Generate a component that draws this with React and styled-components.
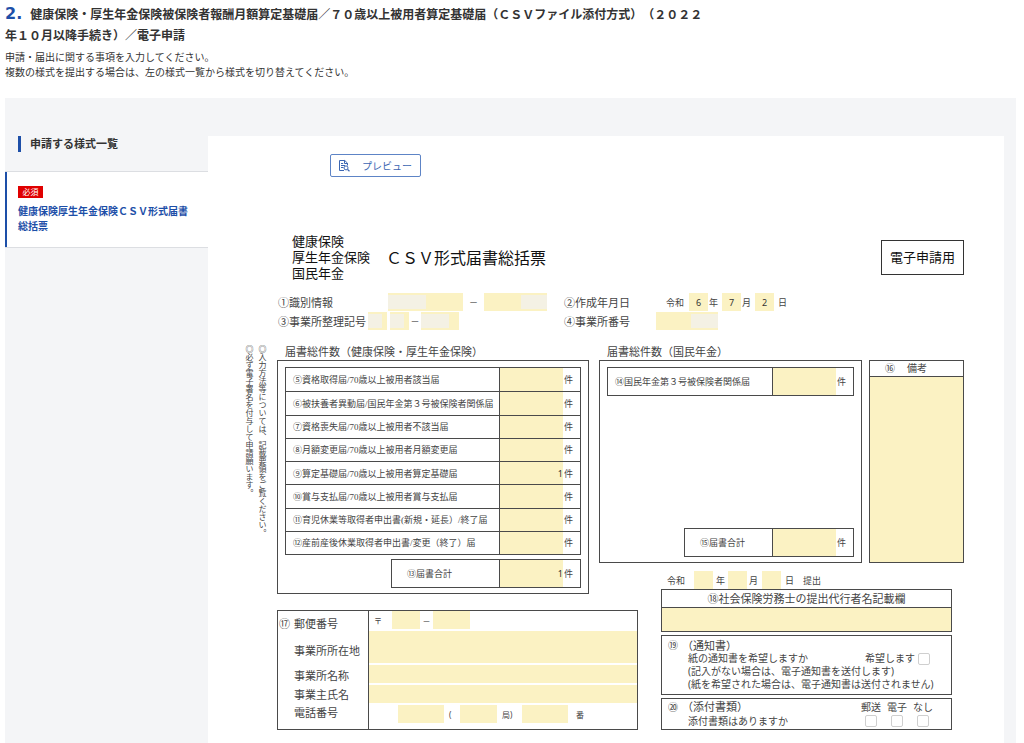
import React from 'react';
import styled, { createGlobalStyle } from 'styled-components';

const BLUE = '#1d4fa8';
const YELLOW = '#fbf2c3';
const MASK = '#f4f1e4';
const LINE = '#4a4a4a';

const GlobalStyle = createGlobalStyle`
  *, *::before, *::after {
    box-sizing: border-box;
  }

  body {
    margin: 0;
    background: #fff;
    color: #333;
    font-family: 'Noto Sans', 'Noto Sans CJK JP', sans-serif;
    font-size: 10px;
    text-spacing-trim: space-all;
  }
`;

const Page = styled.div`
  display: flex;
  flex-direction: column;
  min-height: 100vh;
  padding: 3px 8px 0 5px;
`;

const PageTitle = styled.h1`
  margin: 0;
  font-family: 'Noto Sans CJK JP', sans-serif;
  font-size: 12px;
  font-weight: 700;
  line-height: 21px;
`;

const StepNumber = styled.span`
  margin-right: 8px;
  font-family: 'DejaVu Sans', sans-serif;
  font-size: 16px;
  line-height: 1;
  color: ${BLUE};
`;

const Lead = styled.p`
  margin: 5px 0 18px;
  font-size: 10px;
  line-height: 15px;
`;

const Panel = styled.div`
  flex: 1;
  display: flex;
  padding: 38px 12px 0 0;
  background: #f4f5f7;
`;

const Sidebar = styled.nav`
  flex: 0 0 203px;
`;

const SidebarTitle = styled.h2`
  margin: 0 0 19px 13px;
  padding-left: 9px;
  border-left: 3px solid ${BLUE};
  font-size: 11px;
  line-height: 16px;
`;

const SidebarItem = styled.a`
  display: block;
  padding: 14px 16px 13px 13px;
  border: solid #dcdee2;
  border-width: 1px 0;
  box-shadow: inset 2px 0 0 ${BLUE};
  background: #fff;
  color: ${BLUE};
  font-weight: 700;
  line-height: 15px;
  text-decoration: none;
`;

const RequiredBadge = styled.span`
  display: block;
  width: 25px;
  margin-bottom: 6px;
  background: #e00000;
  color: #fff;
  font-size: 8px;
  font-weight: 400;
  line-height: 12px;
  text-align: center;
`;

const Main = styled.main`
  flex: 1;
  min-width: 0;
  padding: 18px 40px 13px 35px;
  background: #fff;
  color: #444;
`;

const PreviewButton = styled.button`
  display: flex;
  align-items: center;
  gap: 11px;
  height: 23px;
  margin: 0 0 56px 87px;
  padding: 0 8px 0 7px;
  border: 1px solid #5d84c6;
  border-radius: 2px;
  background: #fff;
  color: #3c66b2;
  font-family: inherit;
  font-size: 10px;
`;

const FormHead = styled.div`
  display: flex;
  align-items: center;
  padding-left: 49px;
  margin-bottom: 12px;
  color: #111;
`;

const Schemes = styled.div`
  margin-right: 16px;
  font-size: 13px;
  line-height: 16px;
`;

const FormTitle = styled.h2`
  margin: 0;
  font-size: 16px;
  font-weight: 400;
`;

const Stamp = styled.div`
  margin-left: auto;
  padding: 0 8px;
  border: 1px solid #333;
  font-size: 13px;
  line-height: 33px;
`;

const IdGrid = styled.div`
  display: grid;
  grid-template-columns: 286px 1fr;
  row-gap: 1px;
  margin-bottom: 15px;
  padding-left: 35px;
`;

const Line = styled.div`
  display: flex;
  align-items: center;
  height: 18px;
  padding-left: ${({ $indent }) => $indent || 0}px;
`;

const FieldLabel = styled.span`
  flex: 0 0 ${({ $w }) => $w}px;
  font-size: 11px;
  white-space: nowrap;
`;

const Unit = styled.span`
  flex: 0 0 ${({ $w }) => $w}px;
  padding-left: ${({ $pad }) => $pad || 0}px;
  font-size: ${({ $small }) => ($small ? 8 : 9)}px;
  text-align: ${({ $center }) => ($center ? 'center' : 'left')};
  white-space: nowrap;
`;

const Input = styled.input`
  display: block;
  width: 100%;
  height: 100%;
  min-width: 0;
  margin: 0;
  padding: 0;
  border: 0;
  border-radius: 0;
  outline: 0;
  background: ${YELLOW};
  color: #333;
  font-family: inherit;
  font-size: 9px;
  text-align: ${({ $align }) => $align || 'left'};
`;

const FieldBox = styled.span`
  position: relative;
  flex: 0 0 ${({ $w }) => $w}px;
  height: 18px;
  margin-right: ${({ $after }) => $after || 0}px;
`;

const Mask = styled.span`
  position: absolute;
  top: 2px;
  bottom: 2px;
  ${({ $side }) => $side || 'left'}: 0;
  width: ${({ $w }) => $w}px;
  background: ${MASK};
`;

const FormBody = styled.div`
  display: flex;
  align-items: flex-start;
`;

const SideNotes = styled.div`
  flex: 0 0 34px;
  padding-right: 8px;
  font-size: 8px;
  line-height: 13px;
  white-space: nowrap;
  writing-mode: vertical-rl;
`;

const Sheet = styled.div`
  flex: 1;
  min-width: 0;
`;

const CountArea = styled.div`
  display: grid;
  grid-template-columns: 315fr 263fr 95fr;
  column-gap: 7px;
  align-items: start;
`;

const CountGroup = styled.section`
  min-width: 0;
  padding-right: ${({ $gap }) => $gap || 0}px;
`;

const Caption = styled.h3`
  margin: 0;
  padding-left: 8px;
  font-size: 11px;
  font-weight: 400;
  line-height: 13px;
  height: 15px;
  white-space: nowrap;
`;

const Frame = styled.div`
  display: flex;
  flex-direction: column;
  align-items: flex-end;
  justify-content: space-between;
  height: ${({ $h }) => $h}px;
  padding: 6px 7px 5px;
  border: 1px solid ${LINE};
`;

const CountList = styled.div`
  display: grid;
  grid-auto-rows: 1fr;
  width: ${({ $w }) => $w || '100%'};
  height: ${({ $h }) => $h}px;
  border: 1px solid ${LINE};
`;

const CountItem = styled.div`
  display: grid;
  grid-template-columns: 1fr 63px 17px;
  align-items: center;
  min-height: 0;

  & + & {
    border-top: 1px solid ${LINE};
  }
`;

const CountLabel = styled.label`
  display: flex;
  align-items: center;
  align-self: stretch;
  padding-left: ${({ $pad }) => $pad || 7}px;
  border-right: 1px solid ${LINE};
  font-family: 'Liberation Serif', 'Noto Sans CJK JP', serif;
  font-size: 9px;
  white-space: nowrap;
`;

const CountUnit = styled.span`
  padding-left: 1px;
  font-size: 9px;
`;

const Remarks = styled.div`
  display: flex;
  flex-direction: column;
  height: 203px;
  margin-top: 15px;
  border: 1px solid ${LINE};
`;

const RemarksLabel = styled.label`
  display: flex;
  gap: 12px;
  padding-left: 15px;
  border-bottom: 1px solid ${LINE};
  line-height: 15px;
`;

const TextArea = styled.textarea`
  flex: 1;
  display: block;
  width: 100%;
  min-height: 0;
  padding: 0;
  border: 0;
  outline: 0;
  resize: none;
  background: ${YELLOW};
  font-family: inherit;
  font-size: 9px;
`;

const LowerArea = styled.div`
  display: flex;
  align-items: flex-end;
  padding-right: 12px;
  margin-top: -23px;
`;

const Office = styled.div`
  flex: 360;
  display: grid;
  grid-template-columns: 91px 1fr;
  margin-right: 23px;
  border: 1px solid ${LINE};
`;

const OfficeLabels = styled.div`
  display: grid;
  grid-template-rows: 24px 30px 20px 18px 18px;
  align-content: start;
  align-items: center;
  border-right: 1px solid ${LINE};
  font-size: 11px;
  white-space: nowrap;
`;

const OfficeLabel = styled.label`
  display: grid;
  grid-template-columns: 15px 1fr;
  padding-left: 1px;
`;

const OfficeFields = styled.div`
  display: grid;
  grid-template-rows: 18px 32px 18px 18px 18px;
  row-gap: 2px;
  padding-bottom: 6px;
`;

const Submission = styled.div`
  flex: 292;
  display: flex;
  flex-direction: column;
  gap: 3px;
`;

const Agent = styled.div`
  border: 1px solid ${LINE};
`;

const AgentLabel = styled.label`
  display: block;
  border-bottom: 1px solid ${LINE};
  font-size: 11px;
  line-height: 17px;
  text-align: center;
`;

const AgentInput = styled(Input)`
  height: 23px;
`;

const Box = styled.fieldset`
  display: grid;
  grid-template-columns: 14px 1fr auto;
  min-width: 0;
  margin: 0;
  padding: ${({ $pad }) => $pad};
  border: 1px solid ${LINE};
  line-height: ${({ $lh }) => $lh}px;
  white-space: nowrap;
`;

const BoxTitle = styled.div`
  font-size: 11px;
`;

const Question = styled.div`
  grid-column: 2;
  padding-left: 6px;
`;

const Note = styled.div`
  grid-column: 2 / -1;
  padding-left: 6px;
`;

const Choices = styled.div`
  grid-column: 3;
  grid-row: 1 / 3;
  display: flex;
  gap: 6px;
`;

const Choice = styled.label`
  display: flex;
  flex-direction: ${({ $row }) => ($row ? 'row' : 'column')};
  align-items: ${({ $row }) => ($row ? 'flex-end' : 'center')};
  gap: ${({ $row }) => ($row ? 3 : 1)}px;
`;

const Checkbox = styled.input`
  appearance: none;
  flex: none;
  width: 12px;
  height: 12px;
  margin: 0;
  border: 1px solid #cfcfcf;
  border-radius: 2px;
  background: #fff;
`;

const counts = [
  { label: '⑤資格取得届/70歳以上被用者該当届' },
  { label: '⑥被扶養者異動届/国民年金第３号被保険者関係届' },
  { label: '⑦資格喪失届/70歳以上被用者不該当届' },
  { label: '⑧月額変更届/70歳以上被用者月額変更届' },
  { label: '⑨算定基礎届/70歳以上被用者算定基礎届', value: '1' },
  { label: '⑩賞与支払届/70歳以上被用者賞与支払届' },
  { label: '⑪育児休業等取得者申出書(新規・延長）/終了届' },
  { label: '⑫産前産後休業取得者申出書/変更（終了）届' },
];

const PreviewIcon = () => (
  <svg width="13" height="13" viewBox="0 0 13 13" fill="none" stroke="currentColor" aria-hidden="true">
    <path d="M6 11.5H1.5V1.5h5.3l2.7 2.7v2.3" />
    <path d="M6.5 1.5v3h3" />
    <path d="M3 4.5h2.2M3 6.5h4M3 8.5h2.4" />
    <circle cx="8" cy="8.9" r="2" />
    <path d="M9.6 10.5l1.9 1.7" strokeWidth="1.2" />
  </svg>
);

const Field = ({ name, w, value = '', align, after, mask, side }) => (
  <FieldBox $w={w} $after={after}>
    <Input aria-label={name} defaultValue={value} $align={align} />
    {mask && <Mask $w={mask} $side={side} />}
  </FieldBox>
);

const Count = ({ id, label, value = '', pad }) => (
  <CountItem>
    <CountLabel htmlFor={id} $pad={pad}>{label}</CountLabel>
    <Input id={id} defaultValue={value} $align="right" />
    <CountUnit>件</CountUnit>
  </CountItem>
);

const App = () => (
  <>
    <GlobalStyle />
    <Page lang="ja">
      <PageTitle>
        <StepNumber>2.</StepNumber>
        健康保険・厚生年金保険被保険者報酬月額算定基礎届／７０歳以上被用者算定基礎届（ＣＳＶファイル添付方式）（２０２２
        <br />
        年１０月以降手続き）／電子申請
      </PageTitle>
      <Lead>
        申請・届出に関する事項を入力してください。
        <br />
        複数の様式を提出する場合は、左の様式一覧から様式を切り替えてください。
      </Lead>

      <Panel>
        <Sidebar>
          <SidebarTitle>申請する様式一覧</SidebarTitle>
          <SidebarItem href="#form">
            <RequiredBadge>必須</RequiredBadge>
            健康保険厚生年金保険ＣＳＶ形式届書総括票
          </SidebarItem>
        </Sidebar>

        <Main id="form">
          <PreviewButton type="button">
            <PreviewIcon />
            プレビュー
          </PreviewButton>

          <FormHead>
            <Schemes>
              健康保険
              <br />
              厚生年金保険
              <br />
              国民年金
            </Schemes>
            <FormTitle>ＣＳＶ形式届書総括票</FormTitle>
            <Stamp>電子申請用</Stamp>
          </FormHead>

          <IdGrid>
            <Line>
              <FieldLabel $w={110}>①識別情報</FieldLabel>
              <Field name="識別情報 1" w={75} mask={38} />
              <Unit $w={21} $center>－</Unit>
              <Field name="識別情報 2" w={63} mask={26} side="right" />
            </Line>
            <Line>
              <FieldLabel $w={102}>②作成年月日</FieldLabel>
              <Unit $w={23}>令和</Unit>
              <Field name="作成年" w={19} value="6" align="center" />
              <Unit $w={14} $pad={1}>年</Unit>
              <Field name="作成月" w={19} value="7" align="center" />
              <Unit $w={14} $pad={1}>月</Unit>
              <Field name="作成日" w={19} value="2" align="center" />
              <Unit $w={14} $pad={4}>日</Unit>
            </Line>
            <Line>
              <FieldLabel $w={90}>③事業所整理記号</FieldLabel>
              <Field name="事業所整理記号 1" w={19} mask={14} after={3} />
              <Field name="事業所整理記号 2" w={19} mask={14} />
              <Unit $w={12} $center>－</Unit>
              <Field name="事業所整理記号 3" w={38} mask={28} />
            </Line>
            <Line>
              <FieldLabel $w={92}>④事業所番号</FieldLabel>
              <Field name="事業所番号" w={62} mask={27} side="right" />
            </Line>
          </IdGrid>

          <FormBody>
            <SideNotes>
              ◎入力方法等については、記載要領をご覧ください。
              <br />
              ◎必ず電子署名を付与して申請願います。
            </SideNotes>

            <Sheet>
              <CountArea>
                <CountGroup $gap={3}>
                  <Caption>届書総件数（健康保険・厚生年金保険）</Caption>
                  <Frame $h={234}>
                    <CountList $h={188}>
                      {counts.map(({ label, value }, i) => (
                        <Count key={label} id={`count-${i}`} label={label} value={value} />
                      ))}
                    </CountList>
                    <CountList $h={29} $w="190px">
                      <Count id="count-total" label="⑬届書合計" value="1" pad={15} />
                    </CountList>
                  </Frame>
                </CountGroup>
                <CountGroup>
                  <Caption>届書総件数（国民年金）</Caption>
                  <Frame $h={203}>
                    <CountList $h={29}>
                      <Count id="pension" label="⑭国民年金第３号被保険者関係届" />
                    </CountList>
                    <CountList $h={29} $w="170px">
                      <Count id="pension-total" label="⑮届書合計" pad={15} />
                    </CountList>
                  </Frame>
                </CountGroup>
                <Remarks>
                  <RemarksLabel htmlFor="remarks">
                    <span>⑯</span>
                    <span>備考</span>
                  </RemarksLabel>
                  <TextArea id="remarks" />
                </Remarks>
              </CountArea>

              <LowerArea>
                <Office>
                  <OfficeLabels>
                    <OfficeLabel htmlFor="zip"><span>⑰</span><span>郵便番号</span></OfficeLabel>
                    <OfficeLabel htmlFor="address"><span /><span>事業所所在地</span></OfficeLabel>
                    <OfficeLabel htmlFor="office"><span /><span>事業所名称</span></OfficeLabel>
                    <OfficeLabel htmlFor="owner"><span /><span>事業主氏名</span></OfficeLabel>
                    <OfficeLabel htmlFor="tel"><span /><span>電話番号</span></OfficeLabel>
                  </OfficeLabels>
                  <OfficeFields>
                    <Line $indent={5}>
                      <Unit $w={18} $small>〒</Unit>
                      <FieldBox $w={28}><Input id="zip" /></FieldBox>
                      <Unit $w={13} $center $small>－</Unit>
                      <Field name="郵便番号 2" w={37} />
                    </Line>
                    <TextArea id="address" />
                    <Input id="office" />
                    <Input id="owner" />
                    <Line $indent={29}>
                      <FieldBox $w={46}><Input id="tel" /></FieldBox>
                      <Unit $w={16} $pad={5} $small>(</Unit>
                      <Field name="市内局番" w={37} />
                      <Unit $w={25} $pad={5} $small>局)</Unit>
                      <Field name="加入者番号" w={46} />
                      <Unit $w={16} $pad={8} $small>番</Unit>
                    </Line>
                  </OfficeFields>
                </Office>

                <Submission>
                  <div>
                    <Line $indent={6}>
                      <Unit $w={27}>令和</Unit>
                      <Field name="提出年" w={19} />
                      <Unit $w={15} $pad={3}>年</Unit>
                      <Field name="提出月" w={19} />
                      <Unit $w={15} $pad={2}>月</Unit>
                      <Field name="提出日" w={19} />
                      <Unit $w={22} $pad={4}>日</Unit>
                      <Unit $w={20}>提出</Unit>
                    </Line>
                    <Agent>
                      <AgentLabel htmlFor="agent">⑱社会保険労務士の提出代行者名記載欄</AgentLabel>
                      <AgentInput id="agent" />
                    </Agent>
                  </div>

                  <Box $pad="3px 21px 3px 6px" $lh={13}>
                    <span>⑲</span>
                    <BoxTitle>（通知書）</BoxTitle>
                    <Question>紙の通知書を希望しますか</Question>
                    <Choices>
                      <Choice $row>
                        希望します
                        <Checkbox type="checkbox" />
                      </Choice>
                    </Choices>
                    <Note>(記入がない場合は、電子通知書を送付します)</Note>
                    <Note>(紙を希望された場合は、電子通知書は送付されません)</Note>
                  </Box>

                  <Box $pad="1px 18px 1px 6px" $lh={14}>
                    <span>⑳</span>
                    <BoxTitle>（添付書類）</BoxTitle>
                    <Question>添付書類はありますか</Question>
                    <Choices>
                      {['郵送', '電子', 'なし'].map((name) => (
                        <Choice key={name}>
                          {name}
                          <Checkbox type="checkbox" />
                        </Choice>
                      ))}
                    </Choices>
                  </Box>
                </Submission>
              </LowerArea>
            </Sheet>
          </FormBody>
        </Main>
      </Panel>
    </Page>
  </>
);

export default App;
